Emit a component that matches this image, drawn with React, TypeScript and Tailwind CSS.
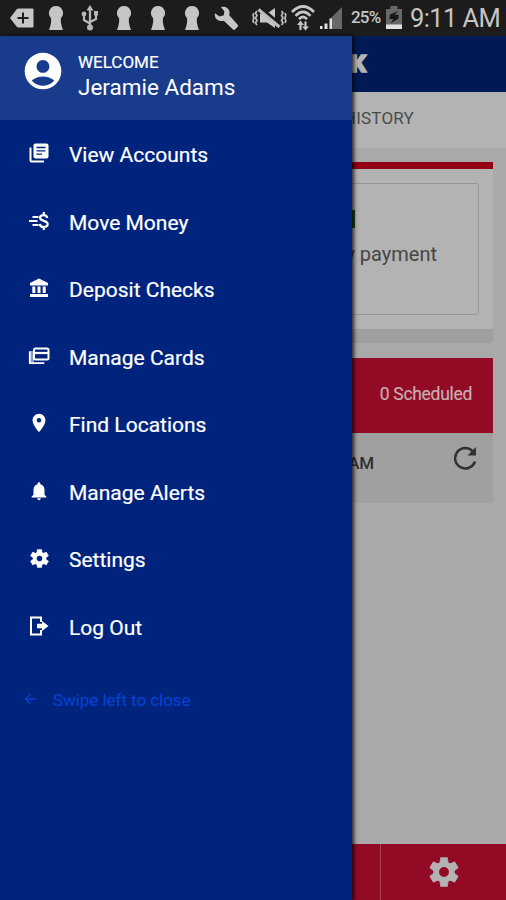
import React from "react";
import { MdAccountCircle, MdArrowBack, MdNotifications, MdPlace } from "react-icons/md";

type MenuItem = {
  label: string;
  icon: React.ReactNode;
};

const Keyhole = () => (
  <svg width="16" height="24" viewBox="0 0 16 24" fill="#c6c6c6">
    <path d="M8 0a7 7 0 0 0-5 11.900C3.600 16 2.600 20 1 24h14c-1.600-4-2.600-8-2-12.100A7 7 0 0 0 8 0z" />
  </svg>
);

const BackspaceTag = () => (
  <svg width="24" height="20" viewBox="0 0 24 20">
    <path d="M0 10 6.500 1.500Q7.500 .5 8.500 .5h14q1 0 1 1v17q0 1-1 1h-14q-1 0-2-1z" fill="#c6c6c6" />
    <path d="M13 4.500v11M7.500 10h11" stroke="#1c1c1c" strokeWidth="2" />
  </svg>
);

const Usb = () => (
  <svg width="18" height="26" viewBox="0 0 18 26" fill="none" stroke="#b8b8b8" strokeWidth="2.200">
    <path d="M9 4v18M9 18.500 3 15V10M9 17l6-3V8" />
    <path d="M9 0 5.500 5.500h7z" fill="#b8b8b8" stroke="none" />
    <circle cx="9" cy="22.500" r="3" fill="#b8b8b8" stroke="none" />
    <circle cx="3" cy="9" r="2.400" fill="#b8b8b8" stroke="none" />
    <path d="M13 6h4v4.500h-4z" fill="#b8b8b8" stroke="none" />
  </svg>
);

const Wrench = () => (
  <svg width="25" height="25" viewBox="0 0 25 25">
    <path
      d="M7 1.200c3.500-1.400 7.300.3 8.300 3.800.4 1.500.3 2.800-.2 4.100l8.600 9.600q.9 1 0 2l-2.700 2.800q-1 .9-2 0l-9.200-8.800C6 16 2 14 1 10.500c-.3-1.200-.3-2 0-3.200l4.500 3.200 4.300-1.300.6-4z"
      fill="#c6c6c6"
    />
  </svg>
);

const Muted = () => (
  <svg width="35" height="22" viewBox="0 0 35 22" fill="none" stroke="#bdbdbd" strokeWidth="1.700">
    <path d="M8 6.500h7l8-5.500v20l-8-5.500H8z" fill="#c6c6c6" stroke="none" />
    <path d="M8 1l21 18" stroke="#1c1c1c" strokeWidth="4.500" />
    <path d="M6.500 2.500l21 17.500" strokeWidth="3" />
    <path d="M5 4 3.500 6 5 8.500 3.500 11 5 13.500 3.500 16 5 18M1.800 6 1 8l.8 3-.8 3 .8 2" />
    <path d="M29.500 4 31 6l-1.500 2.500L31 11l-1.500 2.500L31 16l-1.500 2M33 6l.8 2-.8 3 .8 3-.8 2" />
  </svg>
);

const Wifi = () => (
  <svg width="24" height="26" viewBox="0 0 24 26" fill="none" stroke="#c6c6c6" strokeWidth="2.600">
    <path d="M1 7Q12-4 23 7M4.500 10.800Q12 3 19.500 10.800M8 14.200Q12 9.500 16 14.200" />
    <path d="M9.500 25v-7M14.500 16.500v6" strokeWidth="2.200" />
    <path d="M6 20 9.500 15.500 13 20zM11 21.500l3.500 4 3.500-4z" fill="#c6c6c6" stroke="none" />
  </svg>
);

const Signal = () => (
  <svg width="24" height="24" viewBox="0 0 24 24">
    <path d="M11 13 23 1v22H11z" fill="#686868" />
    <path d="M1 20h2.500v3H1zM5.500 17.500h3V23h-3zM10.500 12.500h2.500V23h-2.500z" fill="#e0e0e0" />
  </svg>
);

const Battery = () => (
  <svg width="18" height="24" viewBox="0 0 18 24">
    <path d="M5.500 0h7v3H17v20H1V3h4.500z" fill="#686868" />
    <path d="M1 18.500h16V23H1z" fill="#e0e0e0" />
    <path d="M13.500 5 5 8.500 4.500 13h4L5.500 17.500l8-5V8.800h-4z" fill="#171717" />
  </svg>
);

const AccountsIcon = () => (
  <svg width="20" height="20" viewBox="0 0 20 20">
    <path d="M1.500 4.500v13q0 1 1 1H15" fill="none" stroke="white" strokeWidth="2" />
    <rect x="4.500" y="0.500" width="15" height="15" rx="2" fill="white" />
    <path d="M7.500 4.500h9M7.500 7.800h9M7.500 11.100h5.500" stroke="#00247d" strokeWidth="1.300" />
  </svg>
);

const MoveMoneyIcon = () => (
  <svg width="20" height="20" viewBox="0 0 20 20" fill="none" stroke="white" strokeWidth="1.900">
    <path d="M3.500 6h6M0 10h8.500M3.500 14h6" />
    <path d="M18.300 7c-.3-2-1.800-2.900-3.700-2.900-2.100 0-3.600 1-3.600 2.700 0 3.800 7.700 2.300 7.700 6.200 0 2-1.700 3-3.900 3s-3.800-1-4.100-3M14.800 1v3.500M14.800 15.500V19" strokeWidth="2.200" />
  </svg>
);

const BankIcon = () => (
  <svg width="18" height="20" viewBox="0 0 18 20" fill="white">
    <path d="M9 .5 18 5v2.500H0V5z" />
    <path d="M2.300 8.500h3v6.500h-3zM7.500 8.500h3v6.500h-3zM12.700 8.500h3v6.500h-3zM0 16h18v3H0z" />
  </svg>
);

const CardsIcon = () => (
  <svg width="22" height="18" viewBox="0 0 22 18" fill="none" stroke="white">
    <path d="M1 4h5v12H1z" fill="white" stroke="none" opacity=".55" />
    <rect x="6" y="1.500" width="14.500" height="11" rx="1.500" strokeWidth="2" />
    <path d="M6 6h14.500" strokeWidth="2.200" />
    <path d="M1.800 4.500v11.700h14.500" strokeWidth="1.800" />
  </svg>
);

const GearIcon = ({ size, hole = 3.600 }: { size: number; hole?: number }) => (
  <svg width={size} height={size} viewBox="-12 -12 24 24" fill="none" stroke="currentColor">
    <circle r={(hole + 8.500) / 2} strokeWidth={8.500 - hole} />
    {[0, 60, 120, 180, 240, 300].map((angle) => (
      <path
        key={angle}
        d="M-3.300-7-2.700-11.500h5.400L3.300-7z"
        transform={`rotate(${angle})`}
        fill="currentColor"
        strokeWidth="0.600"
        strokeLinejoin="round"
      />
    ))}
  </svg>
);

const LogOutIcon = () => (
  <svg width="20" height="20" viewBox="0 0 20 20" fill="none" stroke="white" strokeWidth="2">
    <path d="M12 6V1.500H2v17h10V14" />
    <path d="M8 7.800h5V5l6.500 5-6.500 5v-2.800H8z" fill="white" stroke="none" />
  </svg>
);

const ReloadIcon = () => (
  <svg width="24" height="24" viewBox="0 0 24 24" fill="none" stroke="#303030" strokeWidth="2.500">
    <path d="M22 15.500A10.200 10.200 0 1 1 20 5.500" />
    <path d="M23 1v8.500h-8.500z" fill="#303030" stroke="none" />
  </svg>
);

const menuItems: MenuItem[] = [
  { label: "View Accounts", icon: <AccountsIcon /> },
  { label: "Move Money", icon: <MoveMoneyIcon /> },
  { label: "Deposit Checks", icon: <BankIcon /> },
  { label: "Manage Cards", icon: <CardsIcon /> },
  { label: "Find Locations", icon: <MdPlace size={22} /> },
  { label: "Manage Alerts", icon: <MdNotifications size={22} /> },
  { label: "Settings", icon: <GearIcon size={19} /> },
  { label: "Log Out", icon: <LogOutIcon /> },
];

const notificationIcons = [BackspaceTag, Keyhole, Usb, Keyhole, Keyhole, Keyhole, Wrench];

const StatusBar = () => (
  <div className="flex h-9 shrink-0 items-center bg-[#1c1c1c] pl-[5px] text-[#c6c6c6]">
    {notificationIcons.map((Icon, i) => (
      <div key={i} className="flex w-[34px] justify-center">
        <Icon />
      </div>
    ))}
    <div className="ml-[9px] flex items-center gap-1">
      <Muted />
      <Wifi />
      <Signal />
    </div>
    <span className="ml-[8px] w-[34px] whitespace-nowrap text-[17px] font-medium tracking-[-0.8px]">25%</span>
    <Battery />
    <span className="ml-[7px] whitespace-nowrap text-[25.500px] leading-9 tracking-[-0.6px]">9:11 AM</span>
  </div>
);

const AccountScreen = () => (
  <div className="flex flex-1 flex-col bg-[#a9a9a9]">
    <div className="flex h-14 items-center bg-[#001a57]">
      <span className="w-[366px] text-right text-[24px] font-black text-[#b3b3b3] [-webkit-text-stroke:1.5px_#b3b3b3]">
        BANK
      </span>
    </div>
    <div className="flex h-14 items-center bg-[#b3b3b3] pb-0.5">
      <span className="w-[414px] text-right text-[17px] tracking-[0.2px] text-[#4a4a4a]">HISTORY</span>
    </div>
    <div className="mx-[13px] mt-[14px] border-t-[7px] border-[#930013] bg-[#b3b3b3] p-[14px]">
      <div className="flex h-[132px] flex-col items-end rounded-[3px] border border-[#969696] pr-[41px]">
        <div className="mr-[82px] mt-[26px] h-[18px] w-10 bg-[#1c4a12]" />
        <p className="mt-[12px] text-[20px] leading-7 text-[#454545]">Make my payment</p>
      </div>
    </div>
    <div className="mx-[13px] h-[14px] rounded-b bg-[#9f9f9f]" />
    <div className="mx-[13px] mt-[15px] flex h-[75px] items-center justify-end bg-[#930a24] pb-[3px] pr-[21px]">
      <span className="text-[17.500px] tracking-[-0.3px] text-[#c5adb1] [-webkit-text-stroke:0.2px_#c5adb1]">0 Scheduled</span>
    </div>
    <div className="mx-[13px] flex h-[70px] justify-end rounded-b bg-[#a0a0a0] pr-[16px] pt-[13px]">
      <span className="pt-[5px] text-[17px] font-medium tracking-[-0.2px] text-[#303030]">9:11 AM</span>
      <div className="ml-[79px]">
        <ReloadIcon />
      </div>
    </div>
    <div className="mt-auto flex h-[56px] bg-[#930a24]">
      <div className="w-[381px] border-r border-[#a94155]" />
      <div className="flex flex-1 items-center justify-center text-[#b3b3b3]">
        <GearIcon size={30} hole={4} />
      </div>
    </div>
  </div>
);

const Drawer = () => (
  <div className="absolute bottom-0 left-0 top-9 w-[352px] bg-[#00247d] text-white shadow-[2px_0_4px_rgba(0,0,0,0.8)]">
    <div className="flex h-[84px] bg-[#183b8c] pl-[21px] pt-[13px]">
      <MdAccountCircle size={44} />
      <div className="ml-[13px] pt-[3px]">
        <div className="text-[17px] leading-5 [-webkit-text-stroke:0.2px_white]">WELCOME</div>
        <div className="mt-px text-[22.500px] leading-7">Jeramie Adams</div>
      </div>
    </div>
    <nav className="pt-px">
      {menuItems.map((item) => (
        <div key={item.label} className="flex h-[67.500px] items-center">
          <span className="mb-[3px] ml-[27px] flex w-6 justify-center">{item.icon}</span>
          <span className="ml-[18px] mt-[2px] text-[21px] [-webkit-text-stroke:0.2px_white]">{item.label}</span>
        </div>
      ))}
    </nav>
    <div className="mt-[27px] flex items-center pl-[22px] text-[#0043d8]">
      <MdArrowBack size={16} className="mb-0.5" />
      <span className="ml-[15px] text-[17px] leading-6 tracking-[-0.050px]">Swipe left to close</span>
    </div>
  </div>
);

const App: React.FC = () => {
  return (
    <div className="relative flex h-[900px] w-[506px] flex-col overflow-hidden font-[Roboto,sans-serif]">
      <StatusBar />
      <AccountScreen />
      <Drawer />
    </div>
  );
};

export default App;
